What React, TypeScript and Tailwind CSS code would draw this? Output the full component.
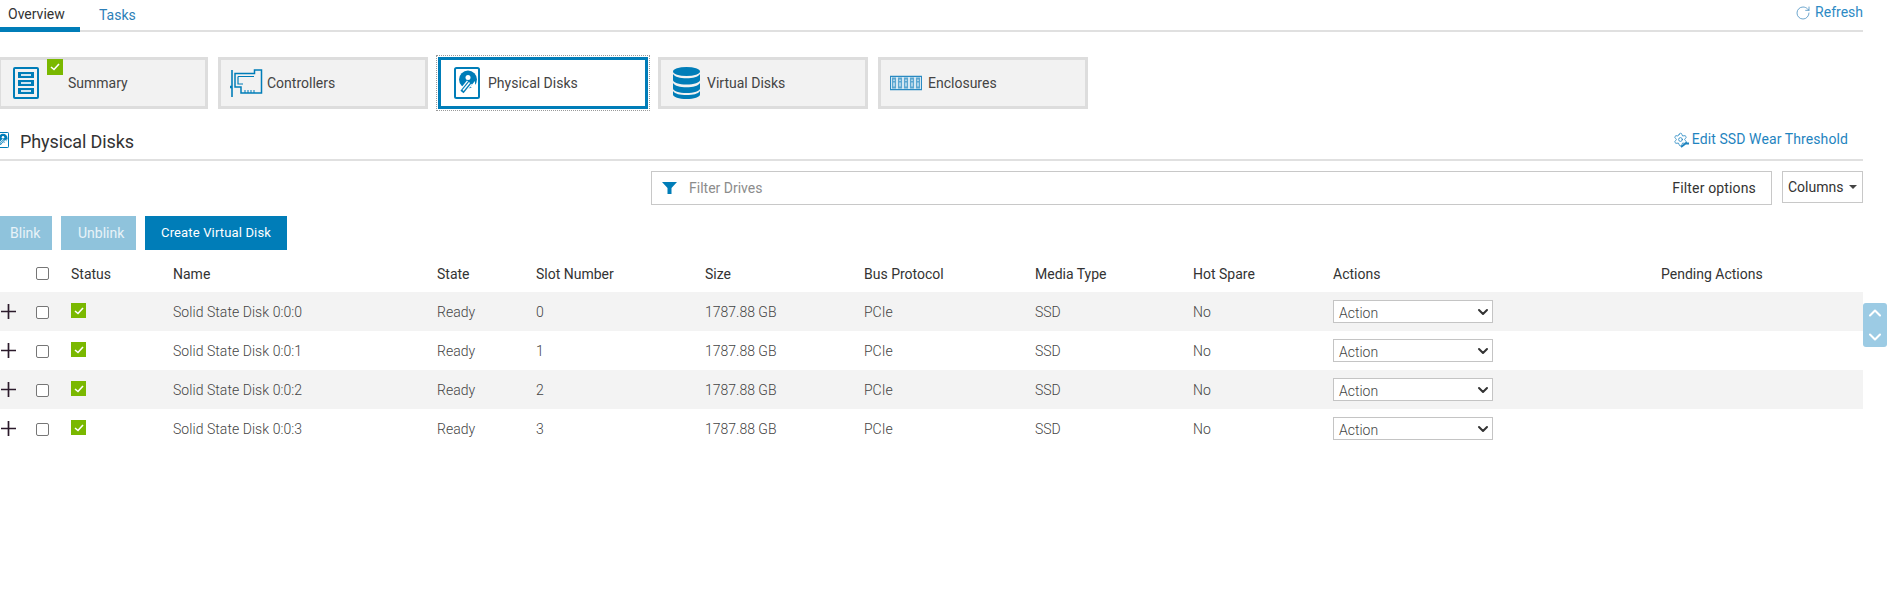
import { ChevronUp, ChevronDown, RotateCw, Settings } from "lucide-react";

const tiles = [
    { name: "Summary", left: "left-[12px]", gap: "pl-[67px]", icon: "summary" },
    { name: "Controllers", left: "left-[9px]", gap: "pl-[46px]", icon: "controllers" },
    { name: "Physical Disks", left: "left-[13px]", gap: "pl-[47px] pt-[1px]", icon: "physical", active: true },
    { name: "Virtual Disks", left: "left-[12px]", gap: "pl-[46px]", icon: "virtual" },
    { name: "Enclosures", left: "left-[9px]", gap: "pl-[47px]", icon: "enclosures" },
];

const columns = [
    { name: "Status", cls: "w-[102px]" },
    { name: "Name", cls: "w-[264px]" },
    { name: "State", cls: "w-[99px]" },
    { name: "Slot Number", cls: "w-[169px]" },
    { name: "Size", cls: "w-[159px]" },
    { name: "Bus Protocol", cls: "w-[171px]" },
    { name: "Media Type", cls: "w-[158px]" },
    { name: "Hot Spare", cls: "w-[140px]" },
    { name: "Actions", cls: "w-[328px]" },
    { name: "Pending Actions", cls: "" },
];

const disks = [0, 1, 2, 3];

function DiskIcon({ width, height }: { width: number; height: number }) {
    return (
        <svg width={width} height={height} viewBox="0 0 26 32">
            <rect x="1" y="1" width="24" height="30" rx="1.5" fill="white" stroke="#007db8" strokeWidth="2" />
            <circle cx="14" cy="12.500" r="9" fill="#007db8" />
            <circle cx="14" cy="10.500" r="2.500" fill="white" />
            <path d="M15.500 15.500L7.500 25.500" stroke="white" strokeWidth="6.500" />
            <path d="M16 15L8 25" stroke="#007db8" strokeWidth="4" />
            <path d="M15.500 15.500L9 23.500" stroke="white" strokeWidth="1.500" />
            <path d="M21 14v8l-5-2z" fill="white" />
        </svg>
    );
}

function TileIcon({ icon }: { icon: string }) {
    if (icon === "summary") {
        return (
            <svg width="26" height="32" viewBox="0 0 26 32" fill="none">
                <rect x="1" y="1" width="24" height="30" rx="1" stroke="#007db8" strokeWidth="2" />
                <rect x="5" y="5" width="16" height="6" fill="#007db8" />
                <rect x="5" y="13" width="16" height="6" fill="#007db8" />
                <rect x="5" y="21" width="16" height="6" fill="#007db8" />
                <rect x="8" y="7" width="10" height="2" fill="#cfe5f1" />
                <rect x="8" y="15" width="10" height="2" fill="#cfe5f1" />
                <rect x="8" y="23" width="10" height="2" fill="#cfe5f1" />
            </svg>
        );
    }
    if (icon === "controllers") {
        return (
            <svg width="33" height="28" viewBox="0 0 33 28" fill="none" stroke="#007db8" strokeWidth="1.500">
                <path d="M2 1v27" strokeWidth="1.600" />
                <path d="M0 18h2" strokeWidth="2.500" />
                <path d="M5 4.500h19.500V1h7v23H11v-6H5z" />
                <path d="M8 7.500h16M8 7.500V15h5" strokeWidth="1.200" />
                <path d="M15 24v-3M18 24v-3M21 24v-3M24 24v-3" strokeWidth="1" />
            </svg>
        );
    }
    if (icon === "physical") {
        return <DiskIcon width={26} height={32} />;
    }
    if (icon === "virtual") {
        return (
            <svg width="27" height="32" viewBox="0 0 27 32" fill="#007db8">
                <ellipse cx="13.500" cy="4.500" rx="13.500" ry="4.500" />
                <path d="M0 7c2 3 7 4.200 13.500 4.200S25 10 27 7v6c0 2.500-6 4.500-13.500 4.500S0 15.500 0 13z" />
                <path d="M0 16c2 3 7 4.200 13.500 4.200S25 19 27 16v5.500c0 2.500-6 4.500-13.500 4.500S0 24 0 21.500z" />
                <path d="M0 24c2 3 7 4 13.500 4S25 27 27 24v3.500c0 2.500-6 4.500-13.500 4.500S0 30 0 27.500z" />
            </svg>
        );
    }
    return (
        <svg width="32" height="15" viewBox="0 0 32 15">
            <rect width="32" height="15" fill="#2a8ac2" />
            <rect x="1" y="1.500" width="30" height="12" fill="#d5e8f3" />
            {[2, 8, 14, 20, 26].map((x) => (
                <g key={x}>
                    <rect x={x} y="2" width="4" height="11" fill="#5ba6d0" />
                    <rect x={x + 1.5} y="4" width="1" height="1.500" fill="white" />
                    <rect x={x + 1.5} y="7" width="1" height="4" fill="white" />
                </g>
            ))}
        </svg>
    );
}

function StatusOk({ size }: { size: string }) {
    return (
        <span className={`${size} bg-[#7ab800] flex items-center justify-center`}>
            <svg width="10" height="8" viewBox="0 0 10 8" fill="none" stroke="white" strokeWidth="1.600">
                <path d="M1 4l3 2.500L9 1" />
            </svg>
        </span>
    );
}

function Checkbox() {
    return <span className="block w-[13px] h-[13px] rounded-[2px] border border-[#767676] bg-white" />;
}

export default function App() {
    return (
        <div className="w-[1889px] h-[606px] bg-white overflow-hidden font-['Roboto',sans-serif] text-[14px] text-[#444]">
            <div className="w-[1863px]">
                {/* tabs */}
                <div className="flex h-[32px] border-b-2 border-[#e0e0e0] relative">
                    <div className="w-[80px] h-[32px] border-b-[5px] border-[#007db8] pl-[8px] pt-[6px] leading-[16px] text-[#333]">Overview</div>
                    <div className="pl-[19px] pt-[7px] leading-[16px] text-[#2d7fb8]">Tasks</div>
                    <div className="ml-auto flex items-center gap-[4px] h-[25px] text-[#2d8ac4]">
                        <RotateCw size={16} strokeWidth={1.2} className="text-[#4a90c2]" />
                        <span>Refresh</span>
                    </div>
                </div>

                {/* tiles */}
                <div className="flex gap-[10px] mt-[25px] -ml-[2px]">
                    {tiles.map((tile) => (
                        <div
                            key={tile.name}
                            className={`w-[210px] h-[52px] relative flex items-center ${tile.gap} text-[14px] text-[#444] ${
                                tile.active
                                    ? "bg-white border-[3px] border-[#007db8] outline-1 outline-dotted outline-offset-1 outline-[#999]"
                                    : "bg-[#f2f2f2] border-[3px] border-[#dddddd]"
                            }`}
                        >
                            <span className={`absolute ${tile.left} top-1/2 -translate-y-1/2 flex`}>
                                <TileIcon icon={tile.icon} />
                            </span>
                            {tile.name === "Summary" && (
                                <span className="absolute left-[46px] -top-[1px] flex">
                                    <StatusOk size="w-[16px] h-[16px]" />
                                </span>
                            )}
                            {tile.name}
                        </div>
                    ))}
                </div>

                {/* section heading */}
                <div className="flex items-center h-[52px] pt-[12px] border-b-2 border-[#e0e0e0] relative">
                    <span className="pl-[20px] text-[18px] text-[#333] mt-[2px] tracking-[-0.1px]">Physical Disks</span>
                    <span className="absolute -left-[4px] top-[23px] flex">
                        <DiskIcon width={13} height={16} />
                    </span>
                    <div className="ml-auto mr-[15px] -mt-[2px] flex items-center gap-[4px] text-[#1f84c0] tracking-[0.1px]">
                        <span className="relative flex">
                            <Settings size={15} strokeWidth={1.3} />
                            <svg className="absolute left-[7px] top-[7px]" width="9" height="9" viewBox="0 0 9 9" fill="none" stroke="#1f84c0" strokeWidth="1.800">
                                <path d="M1 8l6-4.500M6 4.500h3" />
                            </svg>
                        </span>
                        <span>Edit SSD Wear Threshold</span>
                    </div>
                </div>

                {/* filter */}
                <div className="flex justify-end gap-[10px] mt-[10px]">
                    <div className="w-[1121px] h-[34px] border border-[#c8c8c8] flex items-center pl-[10px] pr-[15px]">
                        <svg width="15" height="12" viewBox="0 0 15 12" fill="#007db8">
                            <path d="M0 0h15L9.500 6v6h-4V6z" />
                        </svg>
                        <span className="ml-[12px] text-[#8c8c8c]">Filter Drives</span>
                        <span className="ml-auto text-[#333] tracking-[0.15px]">Filter options</span>
                    </div>
                    <div className="w-[81px] h-[32px] border border-[#c8c8c8] flex items-center pl-[5px] text-[#333]">
                        Columns
                        <span className="ml-[6px] w-0 h-0 border-x-[4px] border-x-transparent border-t-[4px] border-t-[#444]" />
                    </div>
                </div>

                {/* buttons */}
                <div className="flex gap-[9px] mt-[11px] h-[34px]">
                    <div className="w-[52px] bg-[#8fc3dc] text-white/80 flex items-center pl-[10px]">Blink</div>
                    <div className="w-[75px] bg-[#8fc3dc] text-white/80 flex items-center pl-[17px]">Unblink</div>
                    <div className="w-[142px] bg-[#007db8] text-white text-[13px] tracking-[0.15px] flex items-center justify-center">Create Virtual Disk</div>
                </div>

                {/* table */}
                <div className="flex items-center h-[34px] pb-[2px] mt-[8px] text-[#333]">
                    <span className="w-[36px]" />
                    <span className="w-[35px] flex -mt-[2px]">
                        <Checkbox />
                    </span>
                    {columns.map((col) => (
                        <span key={col.name} className={col.cls}>{col.name}</span>
                    ))}
                </div>
                {disks.map((n) => (
                    <div key={n} className={`flex items-center h-[39px] pt-[2px] font-light text-[#444] ${n % 2 === 0 ? "bg-[#f3f3f3]" : "bg-white"}`}>
                        <span className="w-[36px] flex pl-[1px] -mt-[2px]">
                            <svg width="15" height="15" viewBox="0 0 15 15" fill="none" stroke="#2b1a2b" strokeWidth="1.700">
                                <path d="M7.500 0v15M0 7.500h15" />
                            </svg>
                        </span>
                        <span className="w-[35px] flex">
                            <Checkbox />
                        </span>
                        <span className="w-[102px] flex -mt-[4px]">
                            <StatusOk size="w-[15px] h-[15px]" />
                        </span>
                        <span className="w-[264px] tracking-[0.05px]">Solid State Disk 0:0:{n}</span>
                        <span className="w-[99px]">Ready</span>
                        <span className="w-[169px]">{n}</span>
                        <span className="w-[159px]">1787.88 GB</span>
                        <span className="w-[171px]">PCIe</span>
                        <span className="w-[158px]">SSD</span>
                        <span className="w-[140px]">No</span>
                        <span className="w-[160px] h-[23px] -mt-[2px] border border-[#c4c4c4] bg-white flex items-center pl-[5px] pt-[3px]">
                            Action
                            <ChevronDown size={16} strokeWidth={3} className="ml-auto mr-[1px] -mt-[3px] text-[#333]" />
                        </span>
                    </div>
                ))}
            </div>

            {/* floating scroll buttons */}
            <div className="fixed left-[1863px] top-[303px] w-[24px] h-[44px] bg-[#9ccbe4] rounded-[3px] flex flex-col items-center justify-between text-white">
                <ChevronUp size={20} strokeWidth={2.5} />
                <ChevronDown size={20} strokeWidth={2.5} />
            </div>
        </div>
    );
}
